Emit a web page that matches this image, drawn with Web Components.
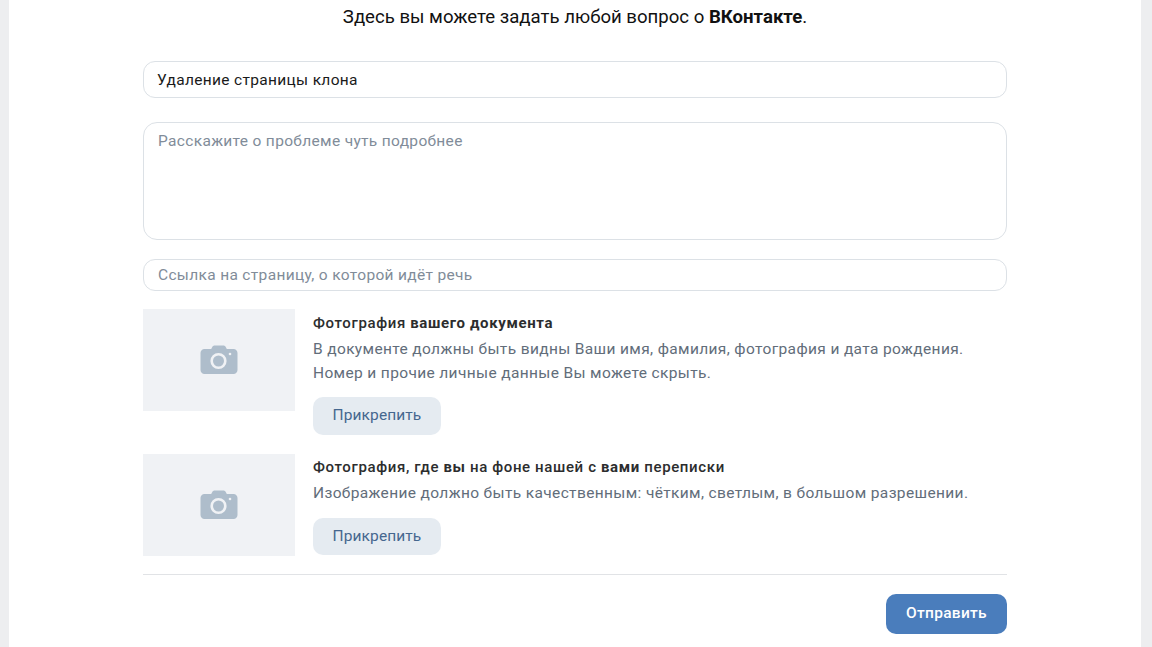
<!DOCTYPE html>
<html lang="ru">
<head>
<meta charset="utf-8">
<title>Поддержка</title>
<style>
  html, body { margin: 0; height: 647px; overflow: hidden; background: #edeef0; font-family: Roboto, "Liberation Sans", sans-serif; }
</style>
</head>
<body>
<support-card>
  <support-field style="--h:37px;--mt:0px;--color:#1a1a1a;--pl:13px" text="Удаление страницы клона"></support-field>
  <support-field style="--h:118px;--mt:24px;--color:#818c99;--pl:14px;--pt:9px;--radius:14px" text="Расскажите о проблеме чуть подробнее"></support-field>
  <support-field style="--h:32px;--mt:19px;--color:#818c99;--pl:14px" text="Ссылка на страницу, о которой идёт речь"></support-field>
  <attach-row style="--mt:18px;--title-top:4px;--btn-top:12px;--btn-h:38px">
    <span slot="title">Фотография <b>вашего документа</b></span>
    В документе должны быть видны Ваши имя, фамилия, фотография и дата рождения.<br>Номер и прочие личные данные Вы можете скрыть.
  </attach-row>
  <attach-row style="--mt:43px;--title-top:3px;--btn-top:13px;--btn-h:37px">
    <span slot="title">Фотография, где <b>вы</b> на фоне нашей с <b>вами</b> переписки</span>
    Изображение должно быть качественным: чётким, светлым, в большом разрешении.
  </attach-row>
  <send-bar></send-bar>
</support-card>

<script>
class SupportCard extends HTMLElement {
  constructor() {
    super();
    this.attachShadow({ mode: 'open' });
    this.shadowRoot.innerHTML = `<style>
        :host { display: block; box-sizing: border-box; width: 1132px; height: 647px; margin-left: 9px; background: #fff; padding: 0 134px; }
        .intro { height: 61px; padding-top: 5px; box-sizing: border-box; text-align: center; font-size: 18.6px; line-height: 24px; color: #111; }
        .intro b { font-weight: 700; }
      </style>
      <div class="intro">Здесь вы можете задать любой вопрос о <b>ВКонтакте</b>.</div>
      <slot></slot>`;
  }
}

class SupportField extends HTMLElement {
  constructor() {
    super();
    this.attachShadow({ mode: 'open' });
    this.shadowRoot.innerHTML = `<style>
        :host { display: block; margin-top: var(--mt, 0); }
        div { box-sizing: border-box; height: var(--h, 37px); padding: var(--pt, 0) 12px 0 var(--pl, 14px); display: flex; align-items: center; border: 1px solid #dce1e6; border-radius: var(--radius, 12px); font-size: 15.5px; letter-spacing: .33px; color: var(--color); background: #fff; }
      </style>
      <div></div>`;
  }

  connectedCallback() {
    const box = this.shadowRoot.querySelector('div');
    box.textContent = this.getAttribute('text');
    if (this.style.getPropertyValue('--pt')) box.style.alignItems = 'flex-start';
  }
}

class AttachRow extends HTMLElement {
  constructor() {
    super();
    this.attachShadow({ mode: 'open' });
    this.shadowRoot.innerHTML = `<style>
        :host { display: flex; gap: 18px; margin-top: var(--mt, 0); height: 102px; }
        .thumb { flex: none; width: 152px; height: 102px; background: #f0f2f5; display: flex; align-items: center; justify-content: center; }
        .info { flex: 1; min-width: 0; }
        .title { font-size: 15px; line-height: 20px; margin-top: var(--title-top, 4px); color: #2c2d2e; letter-spacing: .63px; }
        ::slotted([slot=title]) { font-weight: 500; }
        .text { font-size: 15.5px; line-height: 24px; margin-top: 4px; color: #626d7a; letter-spacing: .36px; }
        button { display: block; margin-top: var(--btn-top, 12px); width: 128px; height: var(--btn-h, 37px); padding: 0 0 2px; border: 0; border-radius: 10px; background: #e5ebf1; color: #45678f; font: 400 15.5px Roboto, sans-serif; letter-spacing: .1px; }
      </style>
      <div class="thumb">
        <svg width="40" height="32" viewBox="0 0 40 32">
          <path fill="#aebdcb" d="M13 3.5c.6-1.400 1.600-2 3-2h8c1.400 0 2.400.6 3 2l.8 1.500h6.700c2.300 0 4 1.700 4 4v17c0 2.300-1.700 4-4 4h-29c-2.300 0-4-1.700-4-4v-17c0-2.300 1.700-4 4-4h6.700z"/>
          <circle cx="19.500" cy="17" r="6.800" fill="none" stroke="#f0f2f5" stroke-width="2.600"/>
          <circle cx="31" cy="10" r="1.300" fill="#f0f2f5"/>
        </svg>
      </div>
      <div class="info">
        <div class="title"><slot name="title"></slot></div>
        <div class="text"><slot></slot></div>
        <button>Прикрепить</button>
      </div>`;
  }
}

class SendBar extends HTMLElement {
  constructor() {
    super();
    this.attachShadow({ mode: 'open' });
    this.shadowRoot.innerHTML = `<style>
        :host { display: flex; justify-content: flex-end; margin-top: 18px; padding-top: 19px; border-top: 1px solid #e1e3e6; }
        button { width: 121px; height: 40px; padding: 0 0 3px; border: 0; border-radius: 10px; background: #4a7dbc; color: #fff; font: 500 15.5px Roboto, sans-serif; letter-spacing: .3px; }
      </style>
      <button>Отправить</button>`;
  }
}

customElements.define('support-card', SupportCard);
customElements.define('support-field', SupportField);
customElements.define('attach-row', AttachRow);
customElements.define('send-bar', SendBar);
</script>
</body>
</html>
